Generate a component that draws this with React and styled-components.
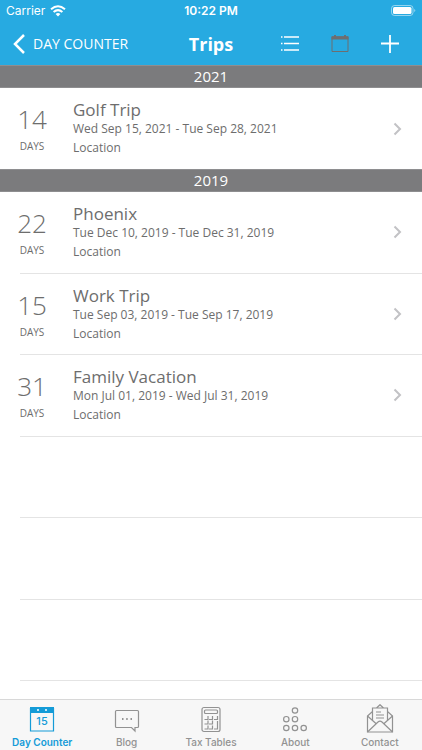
import React from 'react';
import styled, { createGlobalStyle } from 'styled-components';

const sections = [
    {
        year: '2021',
        trips: [
            { days: 14, name: 'Golf Trip', dates: 'Wed Sep 15, 2021 - Tue Sep 28, 2021' },
        ],
    },
    {
        year: '2019',
        trips: [
            { days: 22, name: 'Phoenix', dates: 'Tue Dec 10, 2019 - Tue Dec 31, 2019' },
            { days: 15, name: 'Work Trip', dates: 'Tue Sep 03, 2019 - Tue Sep 17, 2019' },
            { days: 31, name: 'Family Vacation', dates: 'Mon Jul 01, 2019 - Wed Jul 31, 2019' },
        ],
        emptyRows: 3,
    },
];

const GlobalStyle = createGlobalStyle`
    * {
        box-sizing: border-box;
    }

    body {
        margin: 0;
        background: #FFFFFF;
        font-family: 'Open Sans', 'Noto Sans', sans-serif;
        color: #6D6D6D;
    }
`;

const Page = styled.div`
    display: flex;
    flex-direction: column;
    min-height: 100vh;
`;

const Header = styled.header`
    background: #27AAE1;
    color: #FFFFFF;
`;

const StatusBar = styled.div`
    display: grid;
    grid-template-columns: 1fr auto 1fr;
    align-items: center;
    height: 22px;
    padding: 0 6px;
    font-family: Inter, sans-serif;
    font-size: 12px;
    line-height: 22px;
`;

const Carrier = styled.div`
    display: flex;
    align-items: center;
    gap: 5px;
`;

const Clock = styled.time`
    font-weight: 600;
`;

const Battery = styled.div`
    display: flex;
    justify-content: flex-end;
`;

const NavBar = styled.nav`
    display: grid;
    grid-template-columns: 1fr auto 1fr;
    align-items: center;
    height: 43px;
    padding: 0 13px;
`;

const IconButton = styled.button`
    display: flex;
    padding: 0;
    border: 0;
    background: none;
    color: ${props => props.$muted ? '#6D6E71' : '#FFFFFF'};
`;

const BackButton = styled(IconButton)`
    align-items: center;
    gap: 8px;
    font-family: inherit;
    font-size: 14px;
    line-height: 20px;
    white-space: nowrap;
`;

const Title = styled.h1`
    margin: 0;
    font-size: 18px;
    line-height: 24px;
    font-weight: 700;
`;

const Actions = styled.div`
    display: flex;
    align-items: center;
    justify-content: flex-end;
    gap: 32px;
    padding-right: 10px;
`;

const Section = styled.section`
    display: flex;
    flex-direction: column;
    flex: ${props => props.$fill ? '1' : 'none'};
`;

const YearHeading = styled.h2`
    margin: 0;
    border: solid #8E8E90;
    border-width: 1px 0;
    background: #7B7B7D;
    color: #FFFFFF;
    font-size: 15px;
    line-height: 21px;
    font-weight: 400;
    text-align: center;
`;

const TripList = styled.ul`
    display: grid;
    flex: 1;
    grid-auto-rows: minmax(81px, 1fr);
    margin: 0;
    padding: 0 0 ${props => props.$fill ? '18px' : '0'} 20px;
    list-style: none;
`;

const TripItem = styled.li`
    border-bottom: ${props => props.$last ? '0' : '1px solid #E4E4E4'};
`;

const TripLink = styled.a`
    display: flex;
    align-items: flex-start;
    height: 100%;
    padding: 12px 20px 0 0;
    color: inherit;
    text-decoration: none;
`;

const DayCount = styled.div`
    display: flex;
    flex-direction: column;
    align-items: center;
    width: 24px;
    margin-right: 29px;
    padding-top: 2px;
`;

const DayNumber = styled.span`
    font-size: 26px;
    line-height: 34px;
    font-weight: 300;
`;

const DayLabel = styled.span`
    font-size: 10px;
    line-height: 20px;
`;

const TripInfo = styled.div`
    flex: 1;
    font-size: 12px;
    line-height: 19px;
`;

const TripName = styled.h3`
    margin: 0;
    font-size: 17px;
    line-height: 19px;
    font-weight: 400;
`;

const Chevron = styled.svg`
    align-self: center;
    margin-bottom: 12px;
`;

const TabBar = styled.nav`
    display: grid;
    grid-template-columns: repeat(5, 1fr);
    height: 51px;
    border-top: 1px solid #D8D8D8;
    background: #F7F7F7;
`;

const Tab = styled.a`
    display: flex;
    flex-direction: column;
    align-items: center;
    padding-top: 4px;
    color: ${props => props.$active ? '#149BD7' : '#929292'};
    font-family: Inter, sans-serif;
    font-size: 10px;
    line-height: 12px;
    font-weight: ${props => props.$active ? '600' : '500'};
    text-decoration: none;
    white-space: nowrap;
`;

const TabIcon = styled.svg`
    fill: none;
    stroke: currentColor;
    stroke-width: 1.2;
`;

const CounterIcon = () => (
    <TabIcon width="30" height="32" viewBox="0 0 30 32">
        <path d="M3.5 4v23h23V4" />
        <path d="M3 3h24v6H3z" fill="currentColor" stroke="none" />
        <circle cx="11" cy="6" r="1" fill="#FFFFFF" stroke="none" />
        <circle cx="19" cy="6" r="1" fill="#FFFFFF" stroke="none" />
        <text x="15" y="21" textAnchor="middle" fontSize="11" fontWeight="500" fill="currentColor" stroke="none">15</text>
    </TabIcon>
);

const BlogIcon = () => (
    <TabIcon width="30" height="32" viewBox="0 0 30 32">
        <path d="M4.500 6.500h21q1 0 1 1v15q0 1-1 1h-2.500v3.500l-3.500-3.500h-15q-1 0-1-1v-15q0-1 1-1z" />
        <path d="M10 15h1.500M14.200 15h1.500M18.500 15h1.500" strokeWidth="1.800" />
    </TabIcon>
);

const TaxIcon = () => (
    <TabIcon width="30" height="32" viewBox="0 0 30 32">
        <rect x="6" y="3.5" width="18" height="24" rx="2" />
        <rect x="8.5" y="6" width="13" height="3.5" rx="1" />
        <path d="M12 12v3.5H8.5M16.5 12v3.5H13M21.5 12v3.5H18M12 16.5V20H8.5M16.5 16.5V20H13M12 21.5V25H8.5M16.5 21.5V25H13M21.5 17v8H18" />
    </TabIcon>
);

const AboutIcon = () => (
    <TabIcon width="30" height="32" viewBox="0 0 30 32">
        <circle cx="15" cy="6.5" r="2.7" />
        <circle cx="6.3" cy="15.2" r="2.7" />
        <circle cx="15" cy="15.2" r="2.7" />
        <circle cx="6.3" cy="24" r="2.7" />
        <circle cx="15" cy="24" r="2.7" />
        <circle cx="23.7" cy="24" r="2.7" />
    </TabIcon>
);

const ContactIcon = () => (
    <TabIcon width="30" height="32" viewBox="0 0 30 32">
        <path d="M7.5 7.5L2.5 12v16h25V12l-5-4.5M7.5 16.5V4h15v12.5M11.5 4L15 .7 18.5 4" />
        <path d="M2.5 12l9 8M27.5 12l-9 8M2.5 28L13 18q2-1.800 4 0l10.500 10M11 8h5M11 11h8M11 14h8" />
    </TabIcon>
);

const tabs = [
    { label: 'Day Counter', Icon: CounterIcon, active: true },
    { label: 'Blog', Icon: BlogIcon },
    { label: 'Tax Tables', Icon: TaxIcon },
    { label: 'About', Icon: AboutIcon },
    { label: 'Contact', Icon: ContactIcon },
];

const Trip = ({ trip }) => (
    <TripLink href="#trip">
        <DayCount>
            <DayNumber>{trip.days}</DayNumber>
            <DayLabel>DAYS</DayLabel>
        </DayCount>
        <TripInfo>
            <TripName>{trip.name}</TripName>
            <div>{trip.dates}</div>
            <div>Location</div>
        </TripInfo>
        <Chevron width="9" height="14" viewBox="0 0 9 14" fill="none" stroke="#C2C2C5" strokeWidth="2">
            <path d="M1.5 1.5L7 7l-5.5 5.5" />
        </Chevron>
    </TripLink>
);

const App = () => (
    <Page>
        <GlobalStyle />
        <Header>
            <StatusBar>
                <Carrier>
                    Carrier
                    <svg width="16" height="12" viewBox="0 0 16 12" fill="none" stroke="currentColor" strokeWidth="2">
                        <path d="M1 4.3q7-6.2 14 0M3.6 7q4.4-3.8 8.8 0" />
                        <path d="M5.6 8.9q2.4-1.900 4.8 0L8 11.4z" fill="currentColor" stroke="none" />
                    </svg>
                </Carrier>
                <Clock>10:22 PM</Clock>
                <Battery>
                    <svg width="26" height="12" viewBox="0 0 26 12">
                        <rect x="1.5" y=".5" width="21.5" height="10" rx="3" fill="none" stroke="#FFFFFF" strokeOpacity=".5" />
                        <rect x="3" y="2" width="18.5" height="7" rx="1.5" fill="#FFFFFF" />
                        <path d="M24.3 4q2 1.500 0 3z" fill="#FFFFFF" fillOpacity=".6" />
                    </svg>
                </Battery>
            </StatusBar>
            <NavBar>
                <BackButton>
                    <svg width="12" height="20" viewBox="0 0 12 20" fill="none" stroke="currentColor" strokeWidth="2.5">
                        <path d="M11 1L2 10l9 9" />
                    </svg>
                    DAY COUNTER
                </BackButton>
                <Title>Trips</Title>
                <Actions>
                    <IconButton aria-label="List">
                        <svg width="18" height="18" viewBox="0 0 18 18" fill="none" stroke="currentColor" strokeWidth="1.5">
                            <path d="M0 2h1.5M3 2h15M0 8.5h1.5M3 8.5h15M0 15h1.5M3 15h15" />
                        </svg>
                    </IconButton>
                    <IconButton aria-label="Calendar" $muted>
                        <svg width="18" height="18" viewBox="0 0 18 18" fill="none" stroke="currentColor">
                            <path d="M1 2h16v14.5H1z" />
                            <path d="M.5 1.2H3V0h2v1.2h8V0h2v1.2h2.5V4.5H.5z" fill="currentColor" stroke="none" />
                        </svg>
                    </IconButton>
                    <IconButton aria-label="Add trip">
                        <svg width="18" height="18" viewBox="0 0 18 18" fill="none" stroke="currentColor" strokeWidth="1.8">
                            <path d="M9 0v18M0 8.5h18" />
                        </svg>
                    </IconButton>
                </Actions>
            </NavBar>
        </Header>

        {sections.map(({ year, trips, emptyRows = 0 }) => (
            <Section key={year} $fill={emptyRows > 0}>
                <YearHeading>{year}</YearHeading>
                <TripList $fill={emptyRows > 0}>
                    {trips.map((trip, i) => (
                        <TripItem key={trip.name} $last={!emptyRows && i === trips.length - 1}>
                            <Trip trip={trip} />
                        </TripItem>
                    ))}
                    {Array.from({ length: emptyRows }, (_, i) => (
                        <TripItem key={i} aria-hidden="true" />
                    ))}
                </TripList>
            </Section>
        ))}

        <TabBar>
            {tabs.map(({ label, Icon, active }) => (
                <Tab key={label} href="#tab" $active={active}>
                    <Icon />
                    {label}
                </Tab>
            ))}
        </TabBar>
    </Page>
);

export default App;
